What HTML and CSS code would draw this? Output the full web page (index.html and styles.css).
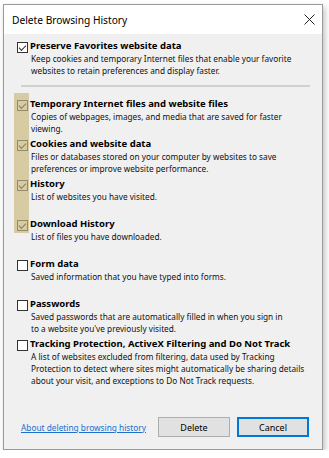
FILE: index.html
```html
<!DOCTYPE html>
<html lang="en">
<head>
  <meta charset="UTF-8" />
  <title>Delete Browsing History</title>
  <link rel="stylesheet" href="styles.css">
</head>
<body>

<div class="dialog">
  <div class="titlebar">
    <span class="title">Delete Browsing History</span>
    <svg class="close-btn" width="11" height="11" viewBox="0 0 11 11">
      <path d="M0.5 0.5 L10.5 10.5 M10.5 0.5 L0.5 10.5" stroke="#222" stroke-width="1" fill="none"/>
    </svg>
  </div>

  <div class="content">
    <div class="option option-first">
      <span class="checkbox checked"></span>
      <div class="option-text">
        <div class="option-label">Preserve Favorites website data</div>
        <div class="option-desc">Keep cookies and temporary Internet files that enable your favorite websites to retain preferences and display faster.</div>
      </div>
    </div>

    <div class="separator"></div>

    <!-- highlighted group -->
    <div class="group highlight">
      <div class="option">
        <span class="checkbox checked"></span>
        <div class="option-text">
          <div class="option-label">Temporary Internet files and website files</div>
          <div class="option-desc">Copies of webpages, images, and media that are saved for faster viewing.</div>
        </div>
      </div>
      <div class="option">
        <span class="checkbox checked"></span>
        <div class="option-text">
          <div class="option-label">Cookies and website data</div>
          <div class="option-desc">Files or databases stored on your computer by websites to save preferences or improve website performance.</div>
        </div>
      </div>
      <div class="option">
        <span class="checkbox checked"></span>
        <div class="option-text">
          <div class="option-label">History</div>
          <div class="option-desc">List of websites you have visited.</div>
        </div>
      </div>
      <div class="option">
        <span class="checkbox checked"></span>
        <div class="option-text">
          <div class="option-label">Download History</div>
          <div class="option-desc">List of files you have downloaded.</div>
        </div>
      </div>
    </div>

    <div class="group">
      <div class="option">
        <span class="checkbox"></span>
        <div class="option-text">
          <div class="option-label">Form data</div>
          <div class="option-desc">Saved information that you have typed into forms.</div>
        </div>
      </div>
      <div class="option">
        <span class="checkbox"></span>
        <div class="option-text">
          <div class="option-label">Passwords</div>
          <div class="option-desc">Saved passwords that are automatically filled in when you sign in<br>to a website you've previously visited.</div>
        </div>
      </div>
      <div class="option">
        <span class="checkbox"></span>
        <div class="option-text">
          <div class="option-label">Tracking Protection, ActiveX Filtering and Do Not Track</div>
          <div class="option-desc">A list of websites excluded from filtering, data used by Tracking Protection to detect where sites might automatically be sharing details about your visit, and exceptions to Do Not Track requests.</div>
        </div>
      </div>
    </div>
  </div>

  <div class="footer">
    <a href="#" class="help-link">About deleting browsing history</a>
    <button class="btn">Delete</button>
    <button class="btn btn-default">Cancel</button>
  </div>
</div>

</body>
</html>
```

FILE: styles.css
```css
body {
  margin: 0;
  padding: 4px 0 0 3px;
  background-color: #fff;
  font-family: 'Noto Sans', 'Liberation Sans', sans-serif;
  color: #000;
}

.dialog {
  width: 318px;
  height: 444px;
  border: 1px solid #9a9a9a;
  background-color: #f0f0f0;
  box-shadow: 2px 3px 6px rgba(0, 0, 0, 0.25);
  display: flex;
  flex-direction: column;
}

.titlebar {
  height: 29px;
  background-color: #fff;
  display: flex;
  align-items: center;
  justify-content: space-between;
  padding: 0 7px 0 8px;
}

.title {
  font-size: 10.2px;
}

.close-btn {
  display: block;
}

.content {
  flex: 1;
  padding: 6px 0 0 13px;
}

.option {
  display: flex;
  gap: 2px;
  height: 40px;
}

.option-first {
  height: auto;
}

.checkbox {
  flex: none;
  width: 9px;
  height: 9px;
  margin-top: 2px;
  border: 1px solid #333;
  background-color: #fff;
  position: relative;
}

.checkbox.checked::after {
  content: '';
  position: absolute;
  left: 1px;
  top: 0px;
  width: 6px;
  height: 3px;
  border-left: 1px solid #333;
  border-bottom: 1px solid #333;
  transform: translate(0, 2px) rotate(-45deg);
}

.option-text {
  flex: 1;
  padding-right: 14px;
}

.option-label {
  font-size: 9.5px;
  font-weight: bold;
  line-height: 14px;
  margin-top: -1px;
}

.option-desc {
  font-size: 8.25px;
  line-height: 11.7px;
  padding-left: 1px;
  color: #111;
}

.separator {
  height: 2px;
  background-color: #d0d0d0;
  margin: 9px 12px 11px 4px;
}

.group {
  position: relative;
}

/* annotation strip behind the checked boxes */
.highlight::before {
  content: '';
  position: absolute;
  left: -3px;
  top: -5px;
  width: 15px;
  height: 140px;
  background-color: #d6cba2;
}

.highlight .checkbox {
  background-color: transparent;
  border-color: #968b68;
}

.highlight .checkbox.checked::after {
  border-color: #8a7f5e;
}

.footer {
  display: flex;
  align-items: center;
  padding: 0 13px 12px 17px;
  gap: 6px;
}

.help-link {
  flex: 1;
  font-size: 8.3px;
  color: #1a6fd1;
}

.btn {
  width: 72px;
  height: 20px;
  font-family: inherit;
  font-size: 9px;
  background-color: #e1e1e1;
  border: 1px solid #adadad;
  padding: 0;
  color: #000;
}

.btn-default {
  border: 2px solid #0078d7;
  margin-left: 1px;
}
```
